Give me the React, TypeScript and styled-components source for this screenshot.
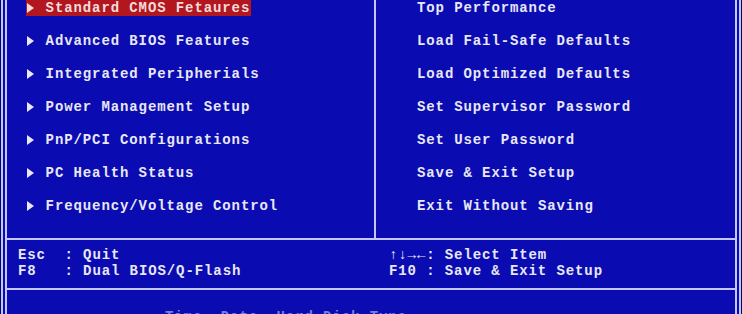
import React from 'react';
import styled, { createGlobalStyle } from 'styled-components';

const line = '#c4c6ff';
const blue = '#0b0bb2';
const ink = '#e8e8f4';

const Global = createGlobalStyle`
  html, body {
    margin: 0;
    padding: 0;
    background: #05056e;
    overflow: hidden;
  }
  * {
    box-sizing: border-box;
  }
`;

const Screen = styled.div`
  width: 742px;
  height: 314px;
  overflow: hidden;
  padding-left: 1px;
  background: #05056e;
  font-family: "Liberation Mono", "DejaVu Sans Mono", monospace;
  font-weight: bold;
  font-size: 14px;
  letter-spacing: 0.9px;
  color: ${ink};
`;

const Frame = styled.div`
  width: 740px;
  height: 330px;
  border: 2px solid ${line};
  border-top: 0;
  padding: 0 2px;
  background: ${blue};
`;

const Inner = styled.div`
  height: 100%;
  border: 2px solid ${line};
  border-top: 0;
  display: flex;
  flex-direction: column;
`;

const Body = styled.div`
  display: grid;
  grid-template-columns: 369px 1fr;
`;

const Column = styled.div<{ $divider?: boolean; $indent: number }>`
  display: flex;
  flex-direction: column;
  gap: 17px;
  padding: 0 0 24px ${p => p.$indent}px;
  border-right: ${p => (p.$divider ? `2px solid ${line}` : '0')};
`;

const Item = styled.div<{ $active?: boolean }>`
  display: flex;
  align-items: center;
  align-self: flex-start;
  height: 16px;
  line-height: 16px;
  white-space: pre;
  padding: 0 1px;
  background: ${p => (p.$active ? '#b2161e' : 'transparent')};
  color: ${p => (p.$active ? '#f4dcdc' : ink)};
`;

const Arrow = styled.span`
  display: inline-block;
  width: 0;
  height: 0;
  border-left: 7px solid currentColor;
  border-top: 5px solid transparent;
  border-bottom: 5px solid transparent;
  margin-right: 11.6px;
`;

const Footer = styled.div`
  display: grid;
  grid-template-columns: 369px 1fr;
  border-top: 2px solid ${line};
  border-bottom: 2px solid ${line};
  padding: 7px 0 9px;
`;

const Keys = styled.div<{ $indent: number }>`
  padding-left: ${p => p.$indent}px;
  line-height: 16px;
  white-space: pre;
`;

const Help = styled.div`
  padding: 19px 0 0 158px;
  line-height: 16px;
  white-space: pre;
  color: #7c7cd8;
`;

const leftItems = [
  'Standard CMOS Fetaures',
  'Advanced BIOS Features',
  'Integrated Peripherials',
  'Power Management Setup',
  'PnP/PCI Configurations',
  'PC Health Status',
  'Frequency/Voltage Control',
];

const rightItems = [
  'Top Performance',
  'Load Fail-Safe Defaults',
  'Load Optimized Defaults',
  'Set Supervisor Password',
  'Set User Password',
  'Save & Exit Setup',
  'Exit Without Saving',
];

const App = () => {
  return (
    <>
      <Global />
      <Screen>
        <Frame>
          <Inner>
            <Body>
              <Column $divider $indent={19}>
                {leftItems.map((label, i) => (
                  <Item key={label} $active={i === 0}>
                    <Arrow />
                    {label}
                  </Item>
                ))}
              </Column>
              <Column $indent={40}>
                {rightItems.map(label => (
                  <Item key={label}>{label}</Item>
                ))}
              </Column>
            </Body>

            <Footer>
              <Keys $indent={11}>
                <div>{'Esc  : Quit'}</div>
                <div>{'F8   : Dual BIOS/Q-Flash'}</div>
              </Keys>
              <Keys $indent={13}>
                <div>{'\u2191\u2193\u2192\u2190: Select Item'}</div>
                <div>{'F10 : Save & Exit Setup'}</div>
              </Keys>
            </Footer>

            <Help>Time, Date, Hard Disk Type...</Help>
          </Inner>
        </Frame>
      </Screen>
    </>
  );
};

export default App;
